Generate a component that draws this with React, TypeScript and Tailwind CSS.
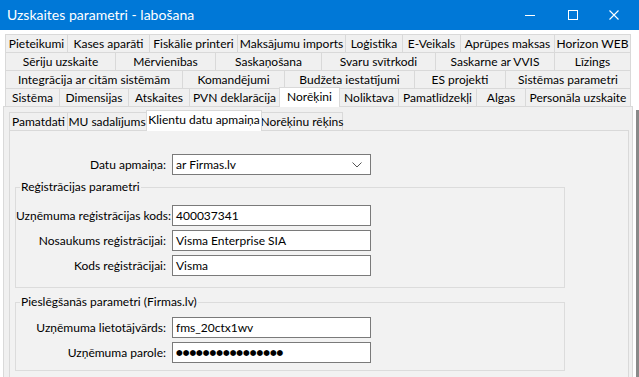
import React from "react";

type T = [string, string];

const row1: T[] = [
  ["Pieteikumi", "w-[63px]"],
  ["Kases aparāti", "w-[82px]"],
  ["Fiskālie printeri", "w-[88px]"],
  ["Maksājumu imports", "w-[108px]"],
  ["Loģistika", "w-[57px]"],
  ["E-Veikals", "w-[58px]"],
  ["Aprūpes maksas", "w-[94px]"],
  ["Horizon WEB", "w-[76px]"],
];
const row2: T[] = [
  ["Sēriju uzskaite", "w-[111px]"],
  ["Mērvienības", "w-[100px]"],
  ["Saskaņošana", "w-[106px]"],
  ["Svaru svītrkodi", "w-[114px]"],
  ["Saskarne ar VVIS", "w-[119px]"],
  ["Līzings", "w-[76px]"],
];
const row3: T[] = [
  ["Integrācija ar citām sistēmām", "w-[178px]"],
  ["Komandējumi", "w-[102px]"],
  ["Budžeta iestatījumi", "w-[130px]"],
  ["ES projekti", "w-[91px]"],
  ["Sistēmas parametri", "w-[125px]"],
];
const row4a: T[] = [
  ["Sistēma", "w-[55px]"],
  ["Dimensijas", "w-[69px]"],
  ["Atskaites", "w-[61px]"],
  ["PVN deklarācija", "w-[90px]"],
];
const row4b: T[] = [
  ["Noliktava", "w-[59px]"],
  ["Pamatlīdzekļi", "w-[78px]"],
  ["Algas", "w-[49px]"],
  ["Personāla uzskaite", "w-[105px]"],
];

function Tab({ label, w, first }: { label: string; w: string; first?: boolean }) {
  return (
    <div
      className={
        "flex items-center justify-center h-[18px] whitespace-nowrap border-t border-r border-[#d9d9d9] bg-[#f0f0f0] " +
        (first ? "border-l " : "") +
        w
      }
    >
      {label}
    </div>
  );
}

function TabRow({ tabs }: { tabs: T[] }) {
  return (
    <div className="flex h-[18px]">
      {tabs.map(([l, w], i) => (
        <Tab key={l} label={l} w={w} first={i === 0} />
      ))}
    </div>
  );
}

function Field({ label, value, password }: { label: string; value: string; password?: boolean }) {
  return (
    <div className="flex items-center h-[21px]">
      <div className="w-[150px] mr-[6px] text-right whitespace-nowrap">{label}</div>
      <div className="w-[199px] h-[21px] border border-[#7a7a7a] bg-white flex items-center pl-[3px] whitespace-nowrap overflow-hidden">
        {password ? (
          <span className="text-[7.7px] tracking-[0px] font-['DejaVu_Sans',sans-serif] leading-none">{value}</span>
        ) : (
          value
        )}
      </div>
    </div>
  );
}

export default function App() {
  return (
    <div className="w-[639px] h-[377px] overflow-hidden bg-white relative font-['Lato',sans-serif] text-[12px] leading-none text-black">
      {/* title bar */}
      <div className="h-[30px] bg-[#0078d7] flex items-center text-white">
        <div className="pl-[7px] text-[14px] flex-1 whitespace-nowrap">Uzskaites parametri - labošana</div>
        <div className="flex items-center h-full">
          <div className="w-[46px] h-full flex items-center justify-center">
            <svg width="10" height="10" viewBox="0 0 10 10">
              <line x1="0" y1="5.5" x2="10" y2="5.5" stroke="white" strokeWidth="1" />
            </svg>
          </div>
          <div className="w-[40px] h-full flex items-center justify-center">
            <svg width="10" height="10" viewBox="0 0 10 10">
              <rect x="0.5" y="0.5" width="9" height="9" fill="none" stroke="white" strokeWidth="1" />
            </svg>
          </div>
          <div className="w-[46px] h-full flex items-center justify-center pr-[4px]">
            <svg width="10" height="10" viewBox="0 0 10 10">
              <path d="M0.5 0.5 L9.5 9.5 M9.5 0.5 L0.5 9.5" stroke="white" strokeWidth="1.1" />
            </svg>
          </div>
        </div>
      </div>

      {/* main tabs */}
      <div className="pl-[5px] pt-[4px]">
        <TabRow tabs={row1} />
        <TabRow tabs={row2} />
        <TabRow tabs={row3} />
        <div className="flex h-[18px] items-start">
          {row4a.map(([l, w], i) => (
            <Tab key={l} label={l} w={w} first={i === 0} />
          ))}
          <div className="relative z-10 -ml-[1px] -mt-[1px] w-[61px] h-[20px] bg-white border-l border-t border-r border-[#d9d9d9] flex items-center justify-center pb-[2px] whitespace-nowrap">
            Norēķini
          </div>
          {row4b.map(([l, w]) => (
            <Tab key={l} label={l} w={w} />
          ))}
        </div>
      </div>

      {/* main panel */}
      <div className="ml-[3px] w-[630px] h-[290px] border border-[#d9d9d9] bg-[#f0f0f0] pl-[5px] pt-[5px]">
        {/* sub tabs */}
        <div className="flex h-[18px] items-start">
          <Tab label="Pamatdati" w="w-[59px]" first />
          <Tab label="MU sadalījums" w="w-[79px]" />
          <div className="relative z-10 -ml-[1px] -mt-[2px] w-[116px] h-[21px] bg-white border-l border-t border-r border-[#d9d9d9] flex items-center justify-center pb-[2px] whitespace-nowrap">
            Klientu datu apmaiņa
          </div>
          <Tab label="Norēķinu rēķins" w="w-[81px]" />
        </div>

        {/* sub page */}
        <div className="w-[620px] h-[260px] border border-[#d9d9d9] bg-[#f2f2f2]">
          <div className="mt-[23px] flex items-center h-[21px]">
            <div className="w-[156px] mr-[6px] text-right whitespace-nowrap">Datu apmaiņa:</div>
            <div className="relative w-[199px] h-[21px] border border-[#7a7a7a] bg-white flex items-center pl-[3px]">
              ar Firmas.lv
              <svg className="absolute right-[8px] top-[7px]" width="10" height="6" viewBox="0 0 10 6">
                <polyline points="0.5,0.5 5,5 9.5,0.5" fill="none" stroke="#555" strokeWidth="1" />
              </svg>
            </div>
          </div>

          <fieldset className="ml-[5px] mt-[4px] w-[550px] border border-[#dcdcdc] pb-[11px]">
            <legend className="ml-[4px] px-[1px] leading-[16px]">Reģistrācijas parametri</legend>
            <div className="mt-[10px] flex flex-col gap-[4px]">
              <Field label="Uzņēmuma reģistrācijas kods:" value="400037341" />
              <Field label="Nosaukums reģistrācijai:" value="Visma Enterprise SIA" />
              <Field label="Kods reģistrācijai:" value="Visma" />
            </div>
          </fieldset>

          <fieldset className="ml-[5px] mt-[6px] w-[550px] border border-[#dcdcdc] pb-[7px]">
            <legend className="ml-[4px] px-[1px] leading-[16px]">Pieslēgšanās parametri (Firmas.lv)</legend>
            <div className="mt-[7px] flex flex-col gap-[4px]">
              <Field label="Uzņēmuma lietotājvārds:" value="fms_20ctx1wv" />
              <Field label="Uzņēmuma parole:" value="●●●●●●●●●●●●●●●●" password />
            </div>
          </fieldset>
        </div>
      </div>

      {/* right window edge */}
      <div className="absolute right-0 top-[110px] bottom-0 w-[3px] bg-[#8a8a8a]" />
    </div>
  );
}
